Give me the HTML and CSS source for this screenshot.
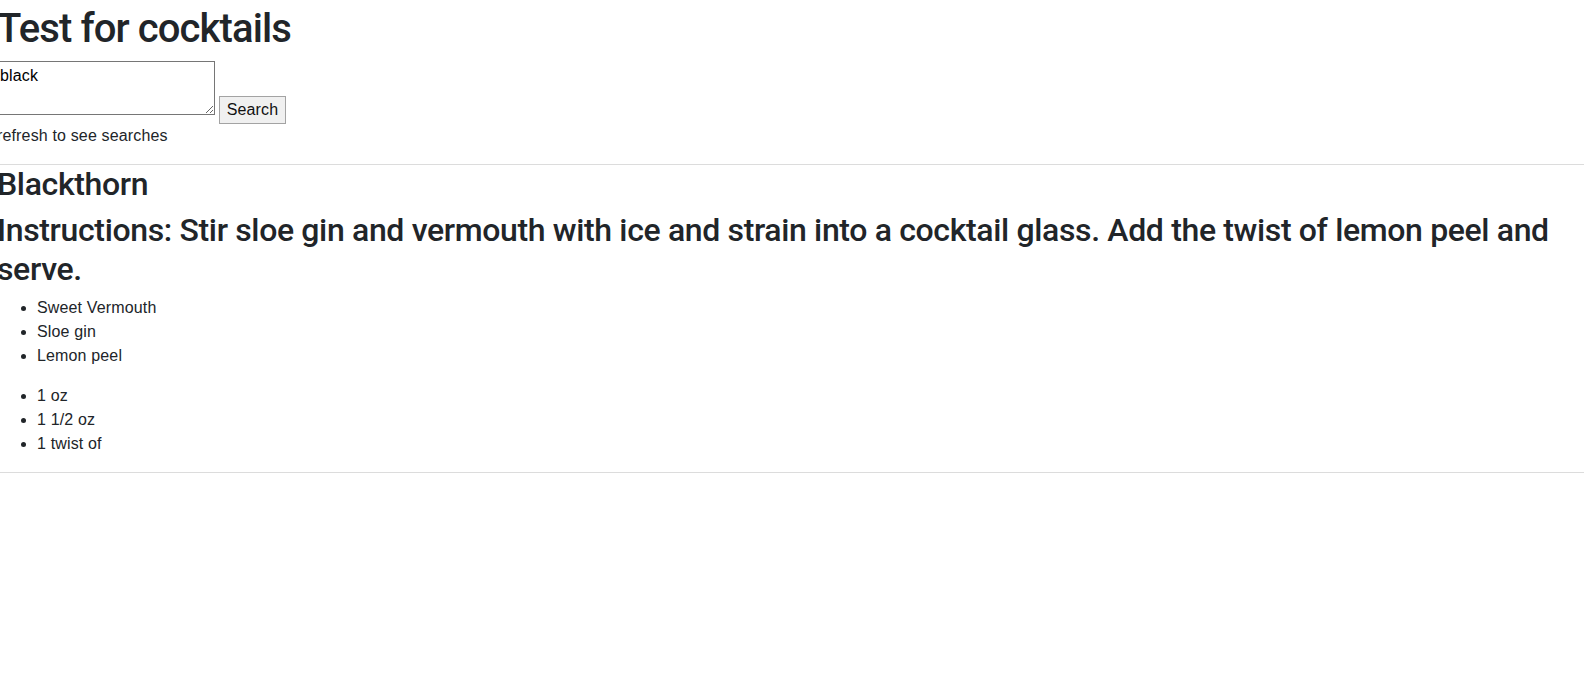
FILE: index.html
```html
<!DOCTYPE html>
<html lang="en">
<head>
<meta charset="utf-8">
<title>Test for cocktails</title>
<link rel="stylesheet" href="styles.css">
</head>
<body>
<div class="page">
  <h1 class="title">Test for cocktails</h1>
  <form class="search"><textarea class="query" rows="2">black</textarea><button type="button" class="search-btn">Search</button></form>
  <p class="note">refresh to see searches</p>
  <div class="drink">
    <h2 class="drink-name">Blackthorn</h2>
    <h2 class="instructions">Instructions: Stir sloe gin and vermouth with ice and strain into a cocktail glass. Add the twist of lemon peel and serve.</h2>
    <ul class="list">
      <li>Sweet Vermouth</li>
      <li>Sloe gin</li>
      <li>Lemon peel</li>
    </ul>
    <ul class="list">
      <li>1 oz</li>
      <li>1 1/2 oz</li>
      <li>1 twist of</li>
    </ul>
  </div>
</div>
</body>
</html>
```
FILE: styles.css
```css
html, body {
  margin: 0;
  padding: 0;
  background: #fff;
}
body {
  font-family: "Liberation Sans", Arial, sans-serif;
  font-size: 16px;
  line-height: 24px;
  letter-spacing: 0.15px;
  color: #212529;
  overflow-x: hidden;
}
.page {
  margin-left: -3px;
  padding-top: 5px;
}
.title,
.drink-name,
.instructions {
  font-family: Roboto, "Liberation Sans", sans-serif;
  font-weight: 500;
}
.title {
  font-size: 40px;
  line-height: 48px;
  letter-spacing: -0.022em;
  margin: 0 0 8px;
}
.search {
  margin: 0;
}
.query {
  box-sizing: border-box;
  width: 218px;
  height: 54px;
  margin: 0;
  padding: 2px;
  border: 1px solid #767676;
  font: inherit;
  line-height: 24px;
  letter-spacing: 0.15px;
  color: #000;
  vertical-align: baseline;
}
.search-btn {
  box-sizing: border-box;
  width: 67px;
  height: 28px;
  margin: 0 0 0 4px;
  padding: 1px 6px;
  border: 1px solid #a3a3a3;
  border-radius: 0;
  background: #f0f0f0;
  font: inherit;
  line-height: 24px;
  letter-spacing: 0.15px;
  color: #111;
  vertical-align: baseline;
}
.note {
  margin: 0 0 16px;
}
.drink {
  border-top: 1px solid #dcdcdc;
  border-bottom: 1px solid #dcdcdc;
}
.drink-name,
.instructions {
  font-size: 32px;
  line-height: 38.4px;
  letter-spacing: -0.011em;
  margin: 0 0 8px;
}
.list {
  margin: 0 0 16px;
  padding-left: 40px;
}
```
